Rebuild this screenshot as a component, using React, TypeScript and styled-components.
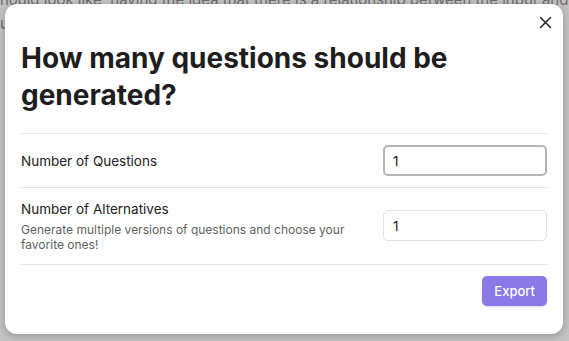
import React from "react";
import styled, { createGlobalStyle } from "styled-components";

const GlobalStyle = createGlobalStyle`
  html, body {
    margin: 0;
    padding: 0;
    background: #c4c4c4;
    font-family: Inter, "Noto Sans", "Liberation Sans", sans-serif;
    overflow: hidden;
  }
`;

const Page = styled.div`
  position: relative;
  width: 569px;
  height: 341px;
  overflow: hidden;
`;

const Backdrop = styled.div`
  color: #6e6e6e;
  font-size: 15px;
  line-height: 24px;
  margin-top: -12px;

  p {
    margin: 0;
    white-space: nowrap;
  }
`;

const Spacer = styled.div<{ h: number }>`
  height: ${(p) => p.h}px;
`;

const LinkLine = styled.p`
  padding-left: 22px;
  a {
    color: #6a5bc9;
    text-decoration: underline;
  }
`;

const Modal = styled.div`
  position: absolute;
  left: 5px;
  top: 4px;
  width: 558px;
  height: 330px;
  box-sizing: border-box;
  background: #ffffff;
  border-radius: 12px;
  box-shadow: 0 2px 10px rgba(0, 0, 0, 0.25);
  padding: 36px 16px 0 16px;
  display: flex;
  flex-direction: column;
`;

const CloseButton = styled.button`
  position: absolute;
  top: 8px;
  right: 8px;
  width: 20px;
  height: 20px;
  padding: 0;
  border: none;
  background: none;
  display: flex;
  align-items: center;
  justify-content: center;
  cursor: pointer;
`;

const Title = styled.h1`
  margin: 0 0 19px 0;
  font-size: 28px;
  line-height: 37px;
  font-weight: 700;
  color: #1e1e1e;
`;

const Setting = styled.div<{ tall?: boolean }>`
  display: flex;
  align-items: center;
  justify-content: space-between;
  border-top: 1px solid #e6e6e6;
  padding: ${(p) => (p.tall ? "11px 0 12px 0" : "11px 0 11px 0")};
`;

const Info = styled.div`
  max-width: 335px;
`;

const Label = styled.div`
  font-size: 13.5px;
  line-height: 20px;
  color: #222222;
`;

const Desc = styled.div`
  margin-top: 3px;
  font-size: 12px;
  line-height: 15px;
  color: #5f5f5f;
`;

const NumInput = styled.input<{ focused?: boolean }>`
  width: 164px;
  height: 31px;
  box-sizing: border-box;
  border-radius: 5px;
  border: ${(p) => (p.focused ? "2px solid #b4b4b4" : "1px solid #e2e2e2")};
  padding: 0 ${(p) => (p.focused ? "8px" : "9px")};
  font-family: inherit;
  font-size: 13.5px;
  color: #222222;
  background: #ffffff;
  outline: none;
`;

const Footer = styled.div`
  border-top: 1px solid #e6e6e6;
  padding-top: 11px;
  display: flex;
  justify-content: flex-end;
`;

const ExportButton = styled.button`
  height: 30px;
  padding: 0 12px;
  border: none;
  border-radius: 5px;
  background: #8a79e6;
  color: #ffffff;
  font-family: inherit;
  font-size: 13px;
  font-weight: 500;
  box-shadow: 0 1px 2px rgba(0, 0, 0, 0.15);
  cursor: pointer;
`;

const App = () => {
  return (
    <>
      <GlobalStyle />
      <Page>
        <Backdrop>
          <p>hould look like, having the idea that there is a relationship between the input and</p>
          <p>u</p>
          <Spacer h={300} />
          <LinkLine>
            - [] <a>Logistic Regression</a>[]
          </LinkLine>
        </Backdrop>
        <Modal>
          <CloseButton aria-label="Close">
            <svg width="13" height="13" viewBox="0 0 13 13">
              <path d="M1.5 1.5 L11.5 11.5 M11.5 1.5 L1.5 11.5" stroke="#222" strokeWidth="1.5" strokeLinecap="round" />
            </svg>
          </CloseButton>
          <Title>How many questions should be generated?</Title>
          <Setting>
            <Info>
              <Label>Number of Questions</Label>
            </Info>
            <NumInput focused defaultValue="1" />
          </Setting>
          <Setting tall>
            <Info>
              <Label>Number of Alternatives</Label>
              <Desc>Generate multiple versions of questions and choose your favorite ones!</Desc>
            </Info>
            <NumInput defaultValue="1" />
          </Setting>
          <Footer>
            <ExportButton>Export</ExportButton>
          </Footer>
        </Modal>
      </Page>
    </>
  );
};

export default App;
